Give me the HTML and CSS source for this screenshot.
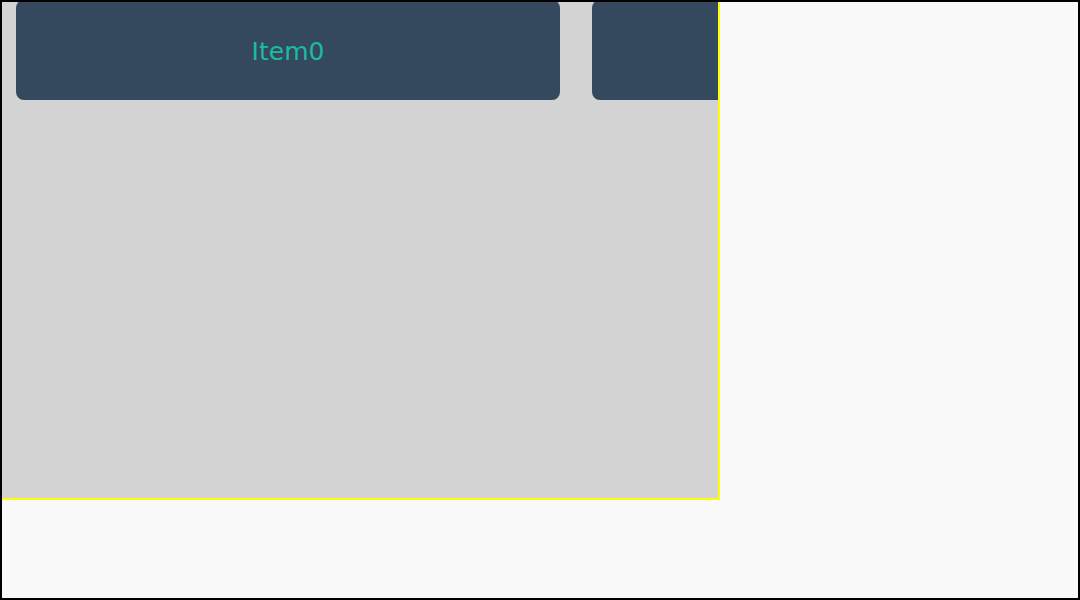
FILE: index.html
```html
<!DOCTYPE html>
<html>
<head>
<meta charset="utf-8">
<link rel="stylesheet" href="styles.css">
</head>
<body>
<div class="box">
  <div class="item">Item0</div>
  <div class="item">Item1</div>
</div>
</body>
</html>
```
FILE: styles.css
```css
html, body {
  margin: 0;
  padding: 0;
}
body {
  width: 1080px;
  height: 600px;
  overflow: hidden;
  background: #f9f9f9;
  font-family: "DejaVu Sans", sans-serif;
}
body::after {
  content: "";
  position: fixed;
  inset: 0;
  border: 2px solid #000;
  pointer-events: none;
}
.box {
  width: 720px;
  height: 500px;
  box-sizing: border-box;
  background: #d3d3d3;
  border-right: 2px solid #ffff00;
  border-bottom: 2px solid #ffff00;
  padding-left: 16px;
  display: flex;
  align-items: flex-start;
  gap: 32px;
  overflow: hidden;
}
.item {
  flex: 0 0 544px;
  height: 100px;
  border-radius: 8px;
  background: #34495e;
  color: #1abc9c;
  font-size: 25px;
  line-height: 1;
  padding-top: 2px;
  box-sizing: border-box;
  display: flex;
  align-items: center;
  justify-content: center;
}
```
